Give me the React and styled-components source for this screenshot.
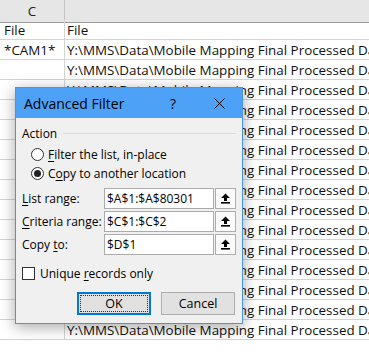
import React from "react";
import styled, { createGlobalStyle } from "styled-components";

const Global = createGlobalStyle`
  html, body { margin: 0; padding: 0; background: #fff; }
  body { width: 369px; height: 357px; overflow: hidden; font-family: "Open Sans", "Noto Sans", sans-serif; }
  * { box-sizing: border-box; }
`;

const Page = styled.div`
  position: relative;
  width: 369px;
  height: 357px;
  overflow: hidden;
  background: #fff;
`;

const Sheet = styled.div`
  display: grid;
  grid-template-columns: 65px 1fr;
  grid-auto-rows: 20px;
  width: 369px;
`;

const HeadCell = styled.div`
  height: 23px;
  background: #e6e6e6;
  border-bottom: 1px solid #9b9b9b;
  border-right: ${(p) => (p.$last ? "none" : "1px solid #c6c6c6")};
  color: #222;
  font-size: 13.4px;
  display: flex;
  align-items: center;
  justify-content: center;
  padding-bottom: 1px;
`;

const Cell = styled.div`
  height: 20px;
  border-bottom: 1px solid #d4d4d4;
  border-right: ${(p) => (p.$last ? "none" : "1px solid #d4d4d4")};
  color: #111;
  font-size: 13.4px;
  line-height: 20px;
  padding-left: ${(p) => (p.$last ? "2px" : "4px")};
  white-space: nowrap;
  overflow: hidden;
`;

const Dialog = styled.div`
  position: absolute;
  left: 15px;
  top: 87px;
  width: 228px;
  height: 237px;
  background: #f0f0f0;
  border: 1px solid #4a94e4;
  box-shadow: 0 3px 14px rgba(0, 0, 0, 0.35);
  display: flex;
  flex-direction: column;
  font-size: 12px;
  color: #000;
`;

const TitleBar = styled.div`
  height: 30px;
  background: #4da2f7;
  display: flex;
  align-items: center;
  padding-left: 8px;
  font-size: 14px;
`;

const TitleText = styled.div`
  flex: 1;
`;

const TitleButton = styled.div`
  width: 46px;
  height: 30px;
  display: flex;
  align-items: center;
  justify-content: center;
  font-size: 14px;
`;

const Body = styled.div`
  flex: 1;
  display: flex;
  flex-direction: column;
  padding: 6px 6px 0 6px;
`;

const Legend = styled.div`
  display: flex;
  align-items: center;
  gap: 6px;
  height: 18px;
  &::after {
    content: "";
    flex: 1;
    height: 1px;
    background: #dcdcdc;
  }
`;

const Options = styled.div`
  display: flex;
  flex-direction: column;
  padding: 3px 0 0 9px;
`;

const Radio = styled.div`
  display: flex;
  align-items: center;
  gap: 4px;
  height: 19px;
`;

const RadioCircle = styled.span`
  width: 13px;
  height: 13px;
  border-radius: 50%;
  border: 1px solid #333;
  background: #fff;
  display: flex;
  align-items: center;
  justify-content: center;
  &::after {
    content: "";
    width: 7px;
    height: 7px;
    border-radius: 50%;
    background: ${(p) => (p.$checked ? "#222" : "transparent")};
  }
`;

const Fields = styled.div`
  display: flex;
  flex-direction: column;
  gap: 2px;
  margin-top: 5px;
`;

const FieldRow = styled.div`
  display: flex;
  align-items: center;
  height: 21px;
`;

const FieldLabel = styled.div`
  width: 82px;
  white-space: nowrap;
`;

const Input = styled.div`
  width: 110px;
  height: 21px;
  background: #fff;
  border: 1px solid #ababab;
  padding-left: 2px;
  display: flex;
  align-items: center;
  margin-right: 1px;
`;

const PickButton = styled.div`
  width: 21px;
  height: 21px;
  border: 1px solid #adadad;
  background: #fafafa;
  display: flex;
  align-items: center;
  justify-content: center;
`;

const CheckRow = styled.div`
  display: flex;
  align-items: center;
  gap: 5px;
  margin-top: 11px;
  height: 15px;
`;

const CheckBox = styled.span`
  width: 13px;
  height: 13px;
  border: 1px solid #333;
  background: #fff;
`;

const Buttons = styled.div`
  display: flex;
  justify-content: flex-end;
  gap: 10px;
  margin-top: 11px;
  padding-right: 1px;
`;

const Button = styled.div`
  width: ${(p) => (p.$w || 74)}px;
  height: 23px;
  background: #e1e1e1;
  border: ${(p) => (p.$default ? "2px solid #0078d7" : "1px solid #adadad")};
  display: flex;
  align-items: center;
  justify-content: center;
  position: relative;
  font-size: 12.5px;
  &::after {
    content: "";
    display: ${(p) => (p.$default ? "block" : "none")};
    position: absolute;
    inset: 1px;
    border: 1px dotted #333;
  }
`;

const U = styled.span`
  text-decoration: underline;
  text-underline-offset: 2px;
`;

const UpArrow = () => (
  <svg width="11" height="11" viewBox="0 0 11 11">
    <path d="M5.5 0.5 L10 5 L7 5 L7 8 L4 8 L4 5 L1 5 Z" fill="#000" />
    <rect x="1" y="9" width="9" height="1.6" fill="#000" />
  </svg>
);

const CloseIcon = () => (
  <svg width="11" height="11" viewBox="0 0 11 11">
    <path d="M0.5 0.5 L10.5 10.5 M10.5 0.5 L0.5 10.5" stroke="#000" strokeWidth="1" />
  </svg>
);

const path = "Y:\\MMS\\Data\\Mobile Mapping Final Processed Data";

export default function App() {
  const rows = [["File", "File"], ["*CAM1*", path]];
  for (let i = 0; i < 14; i++) rows.push(["", path]);
  return (
    <Page>
      <Global />
      <Sheet>
        <HeadCell>C</HeadCell>
        <HeadCell $last />
        {rows.map((r, i) => (
          <React.Fragment key={i}>
            <Cell>{r[0]}</Cell>
            <Cell $last>{r[1]}</Cell>
          </React.Fragment>
        ))}
      </Sheet>
      <Dialog>
        <TitleBar>
          <TitleText>Advanced Filter</TitleText>
          <TitleButton>?</TitleButton>
          <TitleButton>
            <CloseIcon />
          </TitleButton>
        </TitleBar>
        <Body>
          <Legend>Action</Legend>
          <Options>
            <Radio>
              <RadioCircle />
              <span><U>F</U>ilter the list, in-place</span>
            </Radio>
            <Radio>
              <RadioCircle $checked />
              <span>C<U>o</U>py to another location</span>
            </Radio>
          </Options>
          <Fields>
            <FieldRow>
              <FieldLabel><U>L</U>ist range:</FieldLabel>
              <Input>$A$1:$A$80301</Input>
              <PickButton><UpArrow /></PickButton>
            </FieldRow>
            <FieldRow>
              <FieldLabel><U>C</U>riteria range:</FieldLabel>
              <Input>$C$1:$C$2</Input>
              <PickButton><UpArrow /></PickButton>
            </FieldRow>
            <FieldRow>
              <FieldLabel>Copy <U>t</U>o:</FieldLabel>
              <Input>$D$1</Input>
              <PickButton><UpArrow /></PickButton>
            </FieldRow>
          </Fields>
          <CheckRow>
            <CheckBox />
            <span>Unique <U>r</U>ecords only</span>
          </CheckRow>
          <Buttons>
            <Button $default $w={74}>OK</Button>
            <Button $w={74}>Cancel</Button>
          </Buttons>
        </Body>
      </Dialog>
    </Page>
  );
}
